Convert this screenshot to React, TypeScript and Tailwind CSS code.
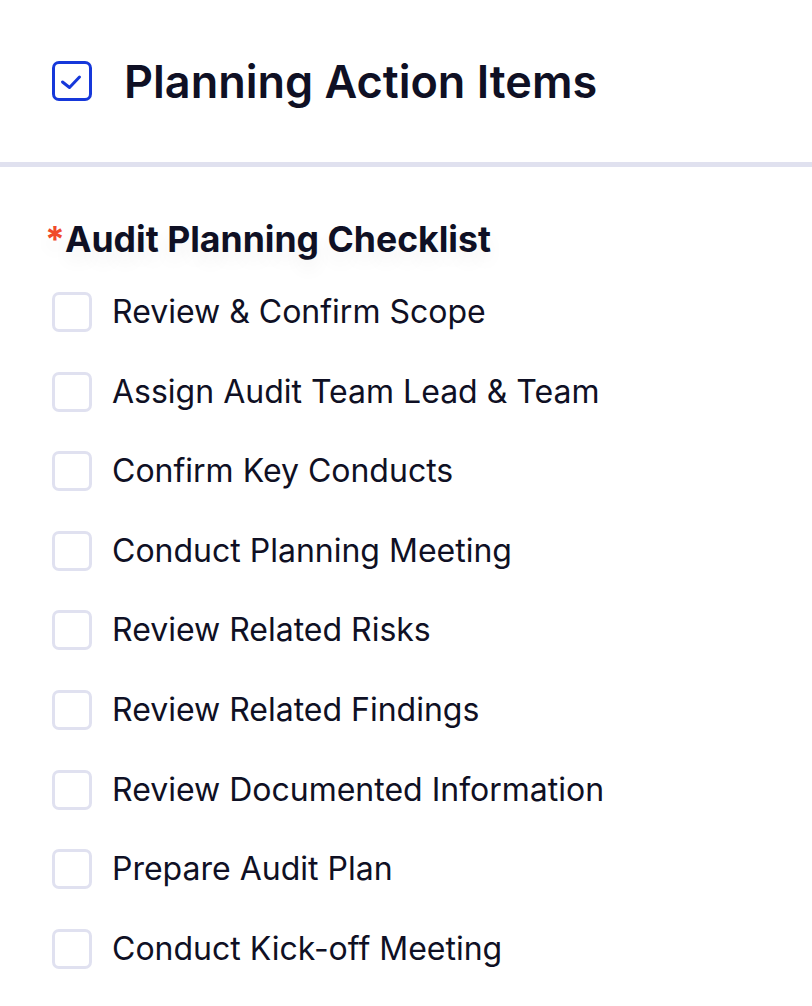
import React from "react";

const items = [
  "Review & Confirm Scope",
  "Assign Audit Team Lead & Team",
  "Confirm Key Conducts",
  "Conduct Planning Meeting",
  "Review Related Risks",
  "Review Related Findings",
  "Review Documented Information",
  "Prepare Audit Plan",
  "Conduct Kick-off Meeting",
];

export default function App() {
  return (
    <div className="w-[812px] h-[1006px] overflow-hidden bg-white font-['Inter',sans-serif] text-[#0f1024]">
      <div className="flex h-[162px] items-center gap-[32px] pl-[52px]">
        <div className="flex h-[40px] w-[40px] shrink-0 items-center justify-center rounded-[7px] border-[3px] border-[#1638da]">
          <svg width="24" height="24" viewBox="0 0 24 24" fill="none">
            <path d="M2.5 13l7 5.5L19.5 8" stroke="#1638da" strokeWidth="3" strokeLinecap="round" strokeLinejoin="round" />
          </svg>
        </div>
        <h1 className="text-[45px] font-semibold leading-none">Planning Action Items</h1>
      </div>
      <div className="h-[5px] bg-[#e0e1ef]" />
      <div className="pl-[45px] pt-[53px]">
        <div className="flex text-[35.6px] font-bold leading-[40px] [text-shadow:0_10px_18px_rgba(0,0,0,0.06)]">
          <span className="text-[#f04a2a]">*</span>
          <span>Audit Planning Checklist</span>
        </div>
      </div>
      <div className="mt-[32px] flex flex-col gap-[39.6px] pl-[52px]">
        {items.map((t) => (
          <div key={t} className="flex items-center gap-[20px]">
            <div className="h-[40px] w-[40px] shrink-0 rounded-[7px] border-[3px] border-[#e0e1f0] bg-white" />
            <span className="text-[32px] leading-[40px]">{t}</span>
          </div>
        ))}
      </div>
    </div>
  );
}
